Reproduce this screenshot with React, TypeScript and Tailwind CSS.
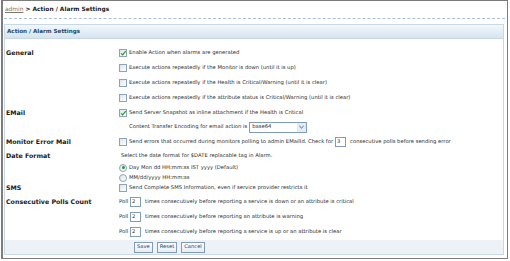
import React from "react";

const font = { fontFamily: '"DejaVu Sans", Verdana, sans-serif' };

function Check({ checked = false }: { checked?: boolean }) {
  return (
    <span className="relative inline-flex w-[8px] h-[8px] shrink-0 border border-[#8fa3b8] bg-gradient-to-br from-[#dfe3e8] to-white">
      {checked && (
        <svg viewBox="0 0 8 8" className="absolute left-0 top-0 w-[7px] h-[7px]">
          <path d="M1.2 3.8 L3 5.6 L6.6 1.4" fill="none" stroke="#21a121" strokeWidth="1.4" />
        </svg>
      )}
    </span>
  );
}

function Radio({ checked = false }: { checked?: boolean }) {
  return (
    <span className="inline-flex items-center justify-center w-[8px] h-[8px] shrink-0 rounded-full border border-[#8fa3b8] bg-gradient-to-br from-[#dfe3e8] to-white">
      {checked && <span className="w-[3px] h-[3px] rounded-full bg-[#21a121]" />}
    </span>
  );
}

function Box({ v }: { v: string }) {
  return (
    <span className="inline-flex items-center w-[11px] h-[10px] border border-[#7f9db9] bg-white px-[1px] text-[5.2px] leading-none">
      {v}
    </span>
  );
}

function Row({
  label,
  h = 15,
  children,
}: {
  label?: string;
  h?: number;
  children: React.ReactNode;
}) {
  return (
    <div className="flex items-center" style={{ height: h }}>
      <div className="w-[114px] pl-[1px] font-bold text-[#1a1a1a] text-[6.3px]">{label}</div>
      <div className="flex items-center gap-[2px] text-[#2b2b2b]">{children}</div>
    </div>
  );
}

function Btn({ t }: { t: string }) {
  return (
    <span className="inline-flex items-center h-[11px] px-[2px] border border-[#7f9db9] bg-gradient-to-b from-white to-[#e6ecf2] text-[#1c3f73] text-[5.2px] leading-none">
      {t}
    </span>
  );
}

export default function App() {
  return (
    <div className="w-[510px] h-[261px] bg-white" style={font}>
      <div className="ml-[1px] w-[507px] h-[259px] border border-[#7c7c7c] border-l-2 pl-[1px] pr-[2px] flex flex-col text-[5.25px]">
        <div className="h-[15px] flex items-end pb-[2px] pl-[1px] text-[5.9px]">
          <span className="text-[#777] underline">admin</span>
          <span className="font-bold text-[#222] ml-[2px]">&gt; Action / Alarm Settings</span>
        </div>
        <div className="h-[5px] border-t border-dashed border-[#a9c0d6] mt-[2px]" />
        <div className="mt-[1px] w-[500px] border border-[#c9d8e6] flex flex-col h-[231px]">
          <div className="h-[14px] flex items-center pl-[2px] bg-gradient-to-b from-[#f3f8fc] to-[#d4e4ee] border-b border-[#c9d8e6] font-bold text-[#2a4766] text-[5.6px]">
            Action / Alarm Settings
          </div>
          <div className="h-[6px]" />
          <Row label="General">
            <Check checked />
            <span>Enable Action when alarms are generated</span>
          </Row>
          <Row>
            <Check />
            <span>Execute actions repeatedly if the Monitor is down (until it is up)</span>
          </Row>
          <Row>
            <Check />
            <span>Execute actions repeatedly if the Health is Critical/Warning (until it is clear)</span>
          </Row>
          <Row>
            <Check />
            <span>Execute actions repeatedly if the attribute status is Critical/Warning (until it is clear)</span>
          </Row>
          <Row label="EMail">
            <Check checked />
            <span>Send Server Snapshot as inline attachment if the Health is Critical</span>
          </Row>
          <Row h={14}>
            <span className="ml-[10px]">Content Transfer Encoding for email action is</span>
            <span className="inline-flex items-center justify-between w-[58px] h-[11px] border border-[#7f9db9] bg-white pl-[2px]">
              <span>base64</span>
              <span className="w-[9px] h-full bg-[#e3ebf5] flex items-center justify-center">
                <svg viewBox="0 0 6 4" className="w-[5px] h-[4px]">
                  <path d="M0.5 0.8 L3 3.2 L5.5 0.8" fill="none" stroke="#4d6185" strokeWidth="1.2" />
                </svg>
              </span>
            </span>
          </Row>
          <Row label="Monitor Error Mail" h={16}>
            <Check />
            <span>Send errors that occurred during monitors polling to admin EMailId. Check for</span>
            <Box v="3" />
            <span className="ml-[2px]">consecutive polls before sending error</span>
          </Row>
          <Row label="Date Format" h={12}>
            <span className="ml-[2px]">Select the date format for $DATE replacable tag in Alarm.</span>
          </Row>
          <Row h={11}>
            <Radio checked />
            <span>Day Mon dd HH:mm:ss IST yyyy (Default)</span>
          </Row>
          <Row h={9}>
            <Radio />
            <span>MM/dd/yyyy HH:mm:ss</span>
          </Row>
          <Row label="SMS" h={12}>
            <Check />
            <span>Send Complete SMS Information, even if service provider restricts it</span>
          </Row>
          <Row label="Consecutive Polls Count">
            <span>Poll</span>
            <Box v="2" />
            <span className="ml-[2px]">times consecutively before reporting a service is down or an attribute is critical</span>
          </Row>
          <Row>
            <span>Poll</span>
            <Box v="2" />
            <span className="ml-[2px]">times consecutively before reporting an attribute is warning</span>
          </Row>
          <Row>
            <span>Poll</span>
            <Box v="2" />
            <span className="ml-[2px]">times consecutively before reporting a service is up or an attribute is clear</span>
          </Row>
          <div className="flex-1" />
          <div className="h-[14px] bg-[#edf2f7] flex items-center gap-[4px] pl-[129px]">
            <Btn t="Save" />
            <Btn t="Reset" />
            <Btn t="Cancel" />
          </div>
        </div>
      </div>
    </div>
  );
}
